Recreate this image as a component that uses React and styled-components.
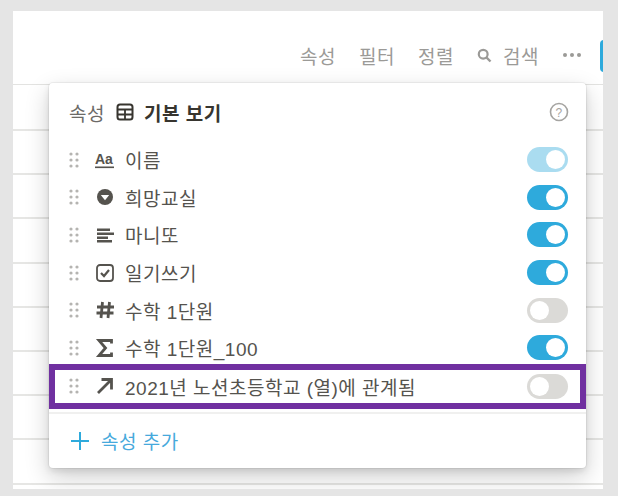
import React from "react"
import styled, { createGlobalStyle } from "styled-components"

const GlobalStyle = createGlobalStyle`
  html, body { margin: 0; padding: 0; background: #e5e5e5; }
  body { font-family: "Liberation Sans", "Noto Sans CJK KR", sans-serif; }
  * { box-sizing: border-box; }
`

const Stage = styled.div`
  width: 618px;
  height: 496px;
  padding: 11px 15px 7px 13px;
  overflow: hidden;
`

const Page = styled.div`
  position: relative;
  height: 100%;
  background: #fff;
  overflow: hidden;
`

const Toolbar = styled.div`
  height: 74px;
  padding: 30px 0 0 287px;
  display: flex;
  align-items: flex-start;
  gap: 23px;
  color: #9b9a97;
  font-size: 19px;
  letter-spacing: 0.5px;
  border-bottom: 1px solid #e3e3e1;
`

const ToolItem = styled.span`
  height: 28px;
  display: flex;
  align-items: center;
  gap: 11px;
`

const NewButton = styled.div`
  position: absolute;
  top: 29px;
  left: 587px;
  width: 30px;
  height: 32px;
  border-radius: 4px;
  background: #2eaadc;
`

const TableRow = styled.div`
  height: ${p => (p.$first ? "46px" : "44.2px")};
  border-bottom: 2px solid #e6e6e4;
`

const Panel = styled.div`
  position: absolute;
  top: 72px;
  left: 36px;
  width: 537px;
  height: 385px;
  background: #fff;
  border-radius: 4px;
  box-shadow: 0 0 0 1px rgba(15, 15, 15, 0.05), 0 3px 6px rgba(15, 15, 15, 0.1), 0 9px 24px rgba(15, 15, 15, 0.2);
  display: flex;
  flex-direction: column;
`

const PanelHeader = styled.div`
  height: 58px;
  padding: 0 17px 0 20px;
  display: flex;
  align-items: center;
  font-size: 19px;
  letter-spacing: 0.5px;
  color: #6b6a67;
`

const ViewName = styled.span`
  display: flex;
  align-items: center;
  gap: 10px;
  margin-left: 11px;
  font-weight: 700;
  color: #37352f;
`

const HelpIcon = styled.svg`
  margin-left: auto;
  width: 20px;
  height: 20px;
`

const Rows = styled.div`
  display: flex;
  flex-direction: column;
`

const Row = styled.div`
  height: 37.6px;
  padding: 0 18px 0 20px;
  display: flex;
  align-items: center;
  font-size: 19px;
  letter-spacing: 0.5px;
  color: #55534e;
`

const Highlight = styled(Row)`
  margin-top: -3px;
  height: 45px;
  border: 6px solid #7030a0;
  padding: 0 12px 0 14px;
`

const RowIcon = styled.svg`
  width: 20px;
  height: 20px;
  margin: 0 10px 0 16px;
  flex: none;
  color: #55534e;
`

const Grip = styled.svg`
  width: 10px;
  height: 16px;
  flex: none;
`

const Toggle = styled.span`
  margin-left: auto;
  width: 41px;
  height: 25px;
  border-radius: 13px;
  padding: 3px;
  flex: none;
  display: flex;
  justify-content: ${p => (p.$on ? "flex-end" : "flex-start")};
  background: ${p => (p.$on ? "#2eaadc" : "#dbdad7")};
  opacity: ${p => (p.$faded ? 0.4 : 1)};

  &::after {
    content: "";
    width: 19px;
    height: 19px;
    border-radius: 50%;
    background: #fff;
  }
`

const Footer = styled.div`
  flex: 1;
  margin-top: 3px;
  border-top: 2px solid #f0f0ef;
  padding: 0 20px;
  display: flex;
  align-items: center;
  gap: 10px;
  font-size: 19px;
  letter-spacing: 0.5px;
  color: #46a9dc;
`

const rows = [
  { name: "이름", icon: "text", on: true, faded: true },
  { name: "희망교실", icon: "select", on: true },
  { name: "마니또", icon: "lines", on: true },
  { name: "일기쓰기", icon: "check", on: true },
  { name: "수학 1단원", icon: "hash", on: false },
  { name: "수학 1단원_100", icon: "sigma", on: true },
]

function GripDots() {
  const dots = []
  for (const y of [2, 8, 14]) {
    for (const x of [2, 8]) dots.push(<circle key={`${x}-${y}`} cx={x} cy={y} r="1.6" fill="#b5b4b1" />)
  }
  return <Grip viewBox="0 0 10 16">{dots}</Grip>
}

function PropIcon({ type }) {
  return (
    <RowIcon viewBox="0 0 20 20">
      {type === "text" && (
        <>
          <text x="0" y="14" fontSize="14" fontWeight="700" letterSpacing="0" fontFamily="Liberation Sans" fill="currentColor">Aa</text>
          <rect x="0" y="16.5" width="19" height="1.6" fill="currentColor" />
        </>
      )}
      {type === "select" && (
        <>
          <circle cx="10" cy="10" r="8" fill="currentColor" />
          <path d="M5.8 8 h8.4 L10 13.2 z" fill="#fff" />
        </>
      )}
      {type === "lines" && (
        <path d="M2 3.5 h13 v2.4 H2 z M2 7.5 h17 v2.4 H2 z M2 11.5 h11 v2.4 H2 z M2 15 h15 v2.4 H2 z" fill="currentColor" />
      )}
      {type === "check" && (
        <>
          <rect x="2" y="2" width="16" height="16" rx="3" fill="none" stroke="currentColor" strokeWidth="1.8" />
          <path d="M6 10 l3 3 l5 -6" fill="none" stroke="currentColor" strokeWidth="2.2" />
        </>
      )}
      {type === "hash" && (
        <path d="M7.5 2 L6 18 M14.5 2 L13 18 M2 7 H19 M1.5 13 H18.5" fill="none" stroke="currentColor" strokeWidth="2.8" />
      )}
      {type === "sigma" && (
        <path d="M16.5 5.5 V2.5 H4 L10.5 10 L4 17.5 H16.5 V14.5" fill="none" stroke="currentColor" strokeWidth="2.8" />
      )}
      {type === "arrow" && (
        <path d="M3 17 L15.5 4.5 M6.5 3.5 H16.5 V13.5" fill="none" stroke="currentColor" strokeWidth="2.8" />
      )}
    </RowIcon>
  )
}

export default function App() {
  return (
    <Stage>
      <GlobalStyle />
      <Page>
        <Toolbar>
          <ToolItem>속성</ToolItem>
          <ToolItem>필터</ToolItem>
          <ToolItem>정렬</ToolItem>
          <ToolItem>
            <svg width="15" height="15" viewBox="0 0 15 15">
              <circle cx="6.2" cy="6.2" r="4.4" fill="none" stroke="#9b9a97" strokeWidth="2.2" />
              <path d="M9.5 9.5 L13.5 13.5" stroke="#9b9a97" strokeWidth="2.4" />
            </svg>
            검색
          </ToolItem>
          <ToolItem>
            <svg width="20" height="6" viewBox="0 0 20 6">
              <circle cx="3" cy="3" r="2" fill="#9b9a97" />
              <circle cx="10" cy="3" r="2" fill="#9b9a97" />
              <circle cx="17" cy="3" r="2" fill="#9b9a97" />
            </svg>
          </ToolItem>
        </Toolbar>
        <NewButton />
        {Array.from({ length: 9 }, (_, i) => <TableRow key={i} $first={i === 0} />)}
        <Panel>
          <PanelHeader>
            속성
            <ViewName>
              <svg width="18" height="18" viewBox="0 0 18 18">
                <rect x="1.5" y="1.5" width="15" height="15" rx="2.5" fill="none" stroke="#37352f" strokeWidth="2" />
                <path d="M1.5 6.5 H16.5 M1.5 11.5 H16.5 M9 6.5 V16.5" stroke="#37352f" strokeWidth="1.8" />
              </svg>
              기본 보기
            </ViewName>
            <HelpIcon viewBox="0 0 20 20">
              <circle cx="10" cy="10" r="8.5" fill="none" stroke="#a5a4a1" strokeWidth="1.6" />
              <text x="10" y="14.5" textAnchor="middle" fontSize="12" fontFamily="Liberation Sans" fill="#a5a4a1">?</text>
            </HelpIcon>
          </PanelHeader>
          <Rows>
            {rows.map(r => (
              <Row key={r.name}>
                <GripDots />
                <PropIcon type={r.icon} />
                {r.name}
                <Toggle $on={r.on} $faded={r.faded} />
              </Row>
            ))}
          </Rows>
          <Highlight>
            <GripDots />
            <PropIcon type="arrow" />
            2021년 노션초등학교 (열)에 관계됨
            <Toggle />
          </Highlight>
          <Footer>
            <svg width="22" height="22" viewBox="0 0 22 22">
              <path d="M11 2 V20 M2 11 H20" stroke="#2eaadc" strokeWidth="2" />
            </svg>
            속성 추가
          </Footer>
        </Panel>
      </Page>
    </Stage>
  )
}
